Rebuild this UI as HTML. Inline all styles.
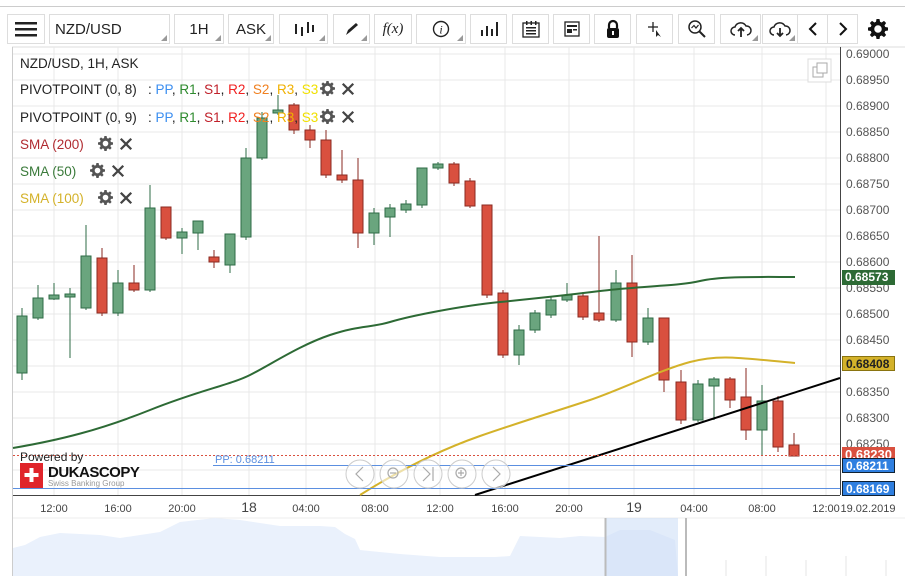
<!DOCTYPE html>
<html><head><meta charset="utf-8"><style>
body{margin:0;width:905px;height:576px;background:#fff;font-family:"Liberation Sans",sans-serif;overflow:hidden;position:relative}
.tb{position:absolute;top:14px;height:30px;border:1px solid #ddd;box-sizing:border-box;background:#fff;font-size:15px;color:#222;display:flex;align-items:center;justify-content:center}
.tb.dd:after{content:"";position:absolute;right:2px;bottom:2px;border-left:6px solid transparent;border-bottom:6px solid #999}
.lg{position:absolute;left:20px;font-size:13.5px;color:#222;white-space:nowrap;height:18px;line-height:18px}
.lg svg{margin-left:6px;vertical-align:-2px}
.pl{position:absolute;left:842px;width:53px;height:15px;font-size:12px;color:#fff;font-weight:bold;line-height:15px;padding-left:3px;box-sizing:border-box}
</style></head><body>
<svg width="0" height="0" style="position:absolute"><defs>
<symbol id="g" viewBox="0 0 16 16"><path d="M6.8 0h2.4l.4 2.2 1.3.6 1.9-1.3 1.7 1.7-1.3 1.9.6 1.3 2.2.4v2.4l-2.2.4-.6 1.3 1.3 1.9-1.7 1.7-1.9-1.3-1.3.6-.4 2.2H6.8l-.4-2.2-1.3-.6-1.9 1.3-1.7-1.7 1.3-1.9-.6-1.3L0 9.2V6.8l2.2-.4.6-1.3-1.3-1.9 1.7-1.7 1.9 1.3 1.3-.6z M8 5a3 3 0 1 0 0 6a3 3 0 1 0 0-6z" fill-rule="evenodd"/></symbol>
<symbol id="x" viewBox="0 0 16 16"><path d="M2 2L14 14M14 2L2 14" stroke="#444" stroke-width="2.6"/></symbol>
</defs></svg>
<div style="position:absolute;left:0;top:6px;width:905px;height:1px;background:#ccc"></div>
<div class="tb" style="left:7px;width:38px"><svg width="22" height="16"><rect y="1" width="22" height="2.5" fill="#222"/><rect y="7" width="22" height="2.5" fill="#222"/><rect y="13" width="22" height="2.5" fill="#222"/></svg></div>
<div class="tb dd" style="left:49px;width:121px;justify-content:flex-start;padding-left:5px">NZD/USD</div>
<div class="tb dd" style="left:174px;width:50px">1H</div>
<div class="tb dd" style="left:228px;width:46px">ASK</div>
<div class="tb dd" style="left:279px;width:49px"><svg width="22" height="16"><g stroke="#222" stroke-width="2"><line x1="3" y1="3" x2="3" y2="13"/><line x1="9" y1="6" x2="9" y2="15"/><line x1="15" y1="1" x2="15" y2="12"/><line x1="20" y1="4" x2="20" y2="11"/></g></svg></div>
<div class="tb dd" style="left:333px;width:37px"><svg width="16" height="16"><path d="M2 14 L4 9 L12 2 L14 4 L6 11 Z" fill="#222"/></svg></div>
<div class="tb" style="left:374px;width:38px;font-family:'Liberation Serif',serif;font-style:italic">f(x)</div>
<div class="tb dd" style="left:416px;width:50px"><svg width="18" height="18"><circle cx="9" cy="9" r="7.5" fill="none" stroke="#222" stroke-width="1.4"/><text x="9" y="13.5" font-size="12" font-style="italic" font-family="Liberation Serif" text-anchor="middle" fill="#222">i</text></svg></div>
<div class="tb" style="left:470px;width:37px"><svg width="18" height="16"><g fill="#222"><rect x="1" y="9" width="2" height="6"/><rect x="6" y="5" width="2" height="10"/><rect x="11" y="8" width="2" height="7"/><rect x="16" y="1" width="2" height="14"/></g></svg></div>
<div class="tb" style="left:512px;width:37px"><svg width="20" height="20"><rect x="2" y="4" width="16" height="14" fill="none" stroke="#222" stroke-width="1.3"/><g fill="#222"><rect x="5" y="2" width="1.5" height="4"/><rect x="9.5" y="2" width="1.5" height="4"/><rect x="14" y="2" width="1.5" height="4"/><rect x="5" y="8" width="10" height="1.5"/><rect x="5" y="11" width="10" height="1.5"/><rect x="5" y="14" width="10" height="1.5"/></g></svg></div>
<div class="tb" style="left:553px;width:37px"><svg width="18" height="18"><rect x="2" y="2" width="14" height="14" fill="none" stroke="#222" stroke-width="1.3"/><rect x="4" y="5" width="10" height="2" fill="#222"/><rect x="4" y="9" width="5" height="4" fill="#222"/><rect x="10" y="9" width="4" height="1.5" fill="#222"/></svg></div>
<div class="tb" style="left:594px;width:37px"><svg width="16" height="20"><path d="M4 9 V6 a4 4 0 0 1 8 0 V9" fill="none" stroke="#111" stroke-width="2.2"/><rect x="2" y="9" width="12" height="10" rx="2" fill="#111"/><rect x="7" y="12" width="2" height="4" fill="#fff"/></svg></div>
<div class="tb" style="left:636px;width:37px"><svg width="20" height="20"><g stroke="#222" stroke-width="1.3"><line x1="8" y1="3" x2="8" y2="13"/><line x1="3" y1="8" x2="13" y2="8"/></g><path d="M11 11 L11 18 L13 16 L16 18 Z" fill="#222"/></svg></div>
<div class="tb" style="left:678px;width:37px"><svg width="20" height="20"><circle cx="8" cy="8" r="6" fill="none" stroke="#222" stroke-width="1.5"/><line x1="12.5" y1="12.5" x2="18" y2="18" stroke="#222" stroke-width="2"/><path d="M4.5 9 L7 6.5 L9 9 L11.5 6" fill="none" stroke="#222" stroke-width="1.2"/></svg></div>
<div class="tb dd" style="left:720px;width:41px"><svg width="24" height="18"><path d="M6 15 a4 4 0 0 1 0-8 a6 6 0 0 1 11-1 a4.5 4.5 0 0 1 1 9" fill="none" stroke="#222" stroke-width="1.5"/><path d="M12 17 V9 M9 11 L12 8 L15 11" fill="none" stroke="#222" stroke-width="1.8"/></svg></div>
<div class="tb dd" style="left:762px;width:36px"><svg width="24" height="18"><path d="M6 15 a4 4 0 0 1 0-8 a6 6 0 0 1 11-1 a4.5 4.5 0 0 1 1 9" fill="none" stroke="#222" stroke-width="1.5"/><path d="M12 8 V16 M9 13 L12 16 L15 13" fill="none" stroke="#222" stroke-width="1.8"/></svg></div>
<div class="tb" style="left:797px;width:31px"><svg width="12" height="16"><path d="M9 2 L3 8 L9 14" fill="none" stroke="#111" stroke-width="2"/></svg></div>
<div class="tb" style="left:827px;width:31px"><svg width="12" height="16"><path d="M3 2 L9 8 L3 14" fill="none" stroke="#111" stroke-width="2"/></svg></div>
<svg style="position:absolute;left:868px;top:19px" width="20" height="20" fill="#111"><use href="#g"/></svg>

<svg style="position:absolute;left:0;top:0" width="905" height="576">
<line x1="12" y1="47" x2="905" y2="47" stroke="#ddd"/>
<line x1="12.5" y1="47" x2="12.5" y2="576" stroke="#ccc"/>
<g stroke="#e8e8e8" stroke-width="1">
<line x1="13" y1="54" x2="840" y2="54"/><line x1="13" y1="80" x2="840" y2="80"/><line x1="13" y1="106" x2="840" y2="106"/><line x1="13" y1="132" x2="840" y2="132"/><line x1="13" y1="158" x2="840" y2="158"/><line x1="13" y1="184" x2="840" y2="184"/><line x1="13" y1="210" x2="840" y2="210"/><line x1="13" y1="236" x2="840" y2="236"/><line x1="13" y1="262" x2="840" y2="262"/><line x1="13" y1="288" x2="840" y2="288"/><line x1="13" y1="314" x2="840" y2="314"/><line x1="13" y1="340" x2="840" y2="340"/><line x1="13" y1="366" x2="840" y2="366"/><line x1="13" y1="392" x2="840" y2="392"/><line x1="13" y1="418" x2="840" y2="418"/><line x1="13" y1="444" x2="840" y2="444"/><line x1="13" y1="470" x2="840" y2="470"/>
<line x1="54" y1="47" x2="54" y2="495"/><line x1="118" y1="47" x2="118" y2="495"/><line x1="182" y1="47" x2="182" y2="495"/><line x1="249" y1="47" x2="249" y2="495"/><line x1="306" y1="47" x2="306" y2="495"/><line x1="375" y1="47" x2="375" y2="495"/><line x1="440" y1="47" x2="440" y2="495"/><line x1="505" y1="47" x2="505" y2="495"/><line x1="569" y1="47" x2="569" y2="495"/><line x1="634" y1="47" x2="634" y2="495"/><line x1="694" y1="47" x2="694" y2="495"/><line x1="762" y1="47" x2="762" y2="495"/><line x1="826" y1="47" x2="826" y2="495"/>
</g>
<line x1="840.5" y1="47" x2="840.5" y2="495" stroke="#444"/>
<line x1="13" y1="495.5" x2="840" y2="495.5" stroke="#444"/>
<g font-size="12" fill="#555" font-family="Liberation Sans">
<text x="846" y="58">0.69000</text><text x="846" y="84">0.68950</text><text x="846" y="110">0.68900</text><text x="846" y="136">0.68850</text><text x="846" y="162">0.68800</text><text x="846" y="188">0.68750</text><text x="846" y="214">0.68700</text><text x="846" y="240">0.68650</text><text x="846" y="266">0.68600</text><text x="846" y="292">0.68550</text><text x="846" y="318">0.68500</text><text x="846" y="344">0.68450</text><text x="846" y="396">0.68350</text><text x="846" y="422">0.68300</text><text x="846" y="448">0.68250</text>
</g>
<g font-size="11" fill="#444" text-anchor="middle">
<text x="54" y="512">12:00</text><text x="118" y="512">16:00</text><text x="182" y="512">20:00</text><text x="249" y="512" font-size="14">18</text><text x="306" y="512">04:00</text><text x="375" y="512">08:00</text><text x="440" y="512">12:00</text><text x="505" y="512">16:00</text><text x="569" y="512">20:00</text><text x="634" y="512" font-size="14">19</text><text x="694" y="512">04:00</text><text x="762" y="512">08:00</text><text x="826" y="512">12:00</text><text x="868" y="512">19.02.2019</text>
</g>
<rect x="808" y="59" width="23" height="23" fill="#fff" stroke="#ddd"/><rect x="813" y="67" width="10" height="10" fill="none" stroke="#aaa"/><rect x="817" y="63" width="10" height="10" fill="#fff" stroke="#aaa"/>
<g stroke-width="1">
<g stroke="#2e6b46" fill="#6aa57e">
<line x1="22" y1="308" x2="22" y2="380"/><rect x="17" y="316" width="10" height="57"/>
<line x1="38" y1="285" x2="38" y2="320"/><rect x="33" y="298" width="10" height="20"/>
<line x1="54" y1="283" x2="54" y2="300"/><rect x="49" y="295" width="10" height="4"/>
<line x1="70" y1="288" x2="70" y2="358"/><rect x="65" y="294" width="10" height="3"/>
<line x1="86" y1="225" x2="86" y2="310"/><rect x="81" y="256" width="10" height="52"/>
<line x1="118" y1="270" x2="118" y2="316"/><rect x="113" y="283" width="10" height="30"/>
<line x1="150" y1="185" x2="150" y2="292"/><rect x="145" y="208" width="10" height="82"/>
<line x1="182" y1="228" x2="182" y2="254"/><rect x="177" y="232" width="10" height="6"/>
<line x1="198" y1="221" x2="198" y2="250"/><rect x="193" y="221" width="10" height="12"/>
<line x1="230" y1="234" x2="230" y2="273"/><rect x="225" y="234" width="10" height="31"/>
<line x1="246" y1="148" x2="246" y2="240"/><rect x="241" y="158" width="10" height="79"/>
<line x1="262" y1="112" x2="262" y2="160"/><rect x="257" y="118" width="10" height="40"/>
<line x1="278" y1="95" x2="278" y2="115"/><rect x="273" y="110" width="10" height="3"/>
<line x1="374" y1="208" x2="374" y2="245"/><rect x="369" y="213" width="10" height="20"/>
<line x1="390" y1="204" x2="390" y2="237"/><rect x="385" y="208" width="10" height="9"/>
<line x1="406" y1="200" x2="406" y2="213"/><rect x="401" y="204" width="10" height="6"/>
<line x1="422" y1="168" x2="422" y2="208"/><rect x="417" y="168" width="10" height="37"/>
<line x1="438" y1="162" x2="438" y2="170"/><rect x="433" y="164" width="10" height="4"/>
<line x1="519" y1="325" x2="519" y2="365"/><rect x="514" y="330" width="10" height="25"/>
<line x1="535" y1="310" x2="535" y2="333"/><rect x="530" y="313" width="10" height="17"/>
<line x1="551" y1="296" x2="551" y2="318"/><rect x="546" y="300" width="10" height="15"/>
<line x1="567" y1="283" x2="567" y2="302"/><rect x="562" y="295" width="10" height="5"/>
<line x1="616" y1="270" x2="616" y2="322"/><rect x="611" y="283" width="10" height="37"/>
<line x1="648" y1="308" x2="648" y2="345"/><rect x="643" y="318" width="10" height="24"/>
<line x1="698" y1="380" x2="698" y2="422"/><rect x="693" y="384" width="10" height="36"/>
<line x1="714" y1="377" x2="714" y2="420"/><rect x="709" y="379" width="10" height="7"/>
<line x1="762" y1="385" x2="762" y2="456"/><rect x="757" y="401" width="10" height="29"/>
</g>
<g stroke="#8a2a20" fill="#d9503f">
<line x1="102" y1="248" x2="102" y2="316"/><rect x="97" y="258" width="10" height="55"/>
<line x1="134" y1="265" x2="134" y2="292"/><rect x="129" y="283" width="10" height="7"/>
<line x1="166" y1="207" x2="166" y2="240"/><rect x="161" y="207" width="10" height="31"/>
<line x1="214" y1="250" x2="214" y2="268"/><rect x="209" y="257" width="10" height="5"/>
<line x1="294" y1="103" x2="294" y2="134"/><rect x="289" y="105" width="10" height="25"/>
<line x1="310" y1="125" x2="310" y2="148"/><rect x="305" y="130" width="10" height="10"/>
<line x1="326" y1="130" x2="326" y2="178"/><rect x="321" y="140" width="10" height="35"/>
<line x1="342" y1="150" x2="342" y2="183"/><rect x="337" y="175" width="10" height="5"/>
<line x1="358" y1="158" x2="358" y2="248"/><rect x="353" y="180" width="10" height="53"/>
<line x1="454" y1="162" x2="454" y2="186"/><rect x="449" y="164" width="10" height="19"/>
<line x1="470" y1="178" x2="470" y2="208"/><rect x="465" y="181" width="10" height="25"/>
<line x1="487" y1="205" x2="487" y2="298"/><rect x="482" y="205" width="10" height="90"/>
<line x1="503" y1="290" x2="503" y2="358"/><rect x="498" y="293" width="10" height="62"/>
<line x1="583" y1="292" x2="583" y2="320"/><rect x="578" y="296" width="10" height="21"/>
<line x1="599" y1="236" x2="599" y2="322"/><rect x="594" y="313" width="10" height="7"/>
<line x1="632" y1="255" x2="632" y2="357"/><rect x="627" y="283" width="10" height="59"/>
<line x1="664" y1="318" x2="664" y2="392"/><rect x="659" y="318" width="10" height="62"/>
<line x1="681" y1="370" x2="681" y2="424"/><rect x="676" y="382" width="10" height="38"/>
<line x1="730" y1="377" x2="730" y2="408"/><rect x="725" y="379" width="10" height="21"/>
<line x1="746" y1="368" x2="746" y2="440"/><rect x="741" y="397" width="10" height="33"/>
<line x1="778" y1="396" x2="778" y2="452"/><rect x="773" y="401" width="10" height="46"/>
<line x1="794" y1="433" x2="794" y2="456"/><rect x="789" y="445" width="10" height="11"/>
</g></g>
<path d="M13 448 C60 440 100 430 150 410 S230 385 250 375 S300 345 330 335 S370 328 390 322 S460 306 500 302 S560 296 600 291 S680 286 700 281 S760 277 795 277" fill="none" stroke="#2d6a35" stroke-width="2"/>
<path d="M360 495 C400 470 440 450 480 436 S560 410 590 400 S660 370 690 362 S740 358 795 363" fill="none" stroke="#d4b22a" stroke-width="2"/>
<line x1="475" y1="495" x2="840" y2="378" stroke="#000" stroke-width="2"/>
<line x1="13" y1="455.5" x2="840" y2="455.5" stroke="#d9503f" stroke-dasharray="2,2"/>
<line x1="213" y1="465.5" x2="840" y2="465.5" stroke="#5b8fe0"/>
<line x1="13" y1="488.5" x2="840" y2="488.5" stroke="#5b8fe0"/>
<text x="215" y="463" font-size="11" fill="#5b8fe0">PP: 0.68211</text>
<g fill="#fff" fill-opacity="0.6" stroke="#ccc"><circle cx="360" cy="474" r="14"/><circle cx="394" cy="474" r="14"/><circle cx="428" cy="474" r="14"/><circle cx="462" cy="474" r="14"/><circle cx="496" cy="474" r="14"/></g>
<g fill="none" stroke="#aaa" stroke-width="1.2"><path d="M363 467 L356 474 L363 481"/><circle cx="393" cy="473" r="5"/><line x1="390" y1="473" x2="396" y2="473"/><path d="M423 467 L430 474 L423 481 M433 467 V481"/><circle cx="461" cy="473" r="5"/><path d="M458 473 H464 M461 470 V476"/><path d="M493 467 L500 474 L493 481"/></g>
<text x="20" y="461" font-size="12" fill="#222">Powered by</text>
<rect x="20" y="463" width="23" height="25" fill="#e0252b"/><path d="M29.5 468 h4 v5 h5 v4 h-5 v5 h-4 v-5 h-5 v-4 h5z" fill="#fff"/>
<text x="48" y="477" font-size="15" font-weight="bold" fill="#111" letter-spacing="-0.5">DUKASCOPY</text>
<text x="48" y="486" font-size="8" fill="#999">Swiss Banking Group</text>
<line x1="13" y1="518" x2="905" y2="518" stroke="#eee"/>
<path d="M13 576 L13 548 L25 545 L40 537 L60 533 L100 535 L120 538 L160 532 L180 522 L215 518 L240 520 L280 526 L320 526 L335 527 L345 534 L355 539 L360 550 L400 554 L440 557 L470 557 L495 557 L510 556 L520 536 L560 538 L580 536 L605 537 L620 530 L650 530 L675 540 L678 576Z" fill="#eaf1fc"/>
<rect x="605" y="518" width="73" height="58" fill="#cfe0f7" fill-opacity="0.6"/>
<g stroke="#e6e6e6"><line x1="726" y1="560" x2="726" y2="576"/><line x1="766" y1="556" x2="766" y2="576"/><line x1="806" y1="560" x2="806" y2="576"/><line x1="846" y1="556" x2="846" y2="576"/><line x1="886" y1="560" x2="886" y2="576"/></g>
<line x1="605.5" y1="518" x2="605.5" y2="576" stroke="#bbb" stroke-width="2"/>
<line x1="686" y1="518" x2="686" y2="576" stroke="#bbb" stroke-width="2"/>
</svg>
<div class="pl" style="top:270px;background:#2d6a35">0.68573</div>
<div class="pl" style="top:356px;background:#d4b22a;color:#222;border:1px solid #8a7410">0.68408</div>
<div class="pl" style="top:447px;background:#d9503f;font-size:13px">0.68230</div>
<div class="pl" style="top:458px;background:#2f7fe0;border:1px solid #123">0.68211</div>
<div class="pl" style="top:481px;background:#2f7fe0;border:1px solid #123">0.68169</div>

<div class="lg" style="top:81px">PIVOTPOINT (0, 8) &nbsp;&nbsp;: <span style="color:#3b8ef0">PP</span>, <span style="color:#2e8b2e">R1</span>, <span style="color:#c0202a">S1</span>, <span style="color:#f02020">R2</span>, <span style="color:#f08020">S2</span>, <span style="color:#f0b000">R3</span>, <span style="color:#f0e000">S3</span><svg width="15" height="15" fill="#555" style="margin-left:2px"><use href="#g"/></svg><svg width="14" height="14"><use href="#x"/></svg></div>
<div class="lg" style="top:55px">NZD/USD, 1H, ASK</div>
<div class="lg" style="top:109px">PIVOTPOINT (0, 9) &nbsp;&nbsp;: <span style="color:#3b8ef0">PP</span>, <span style="color:#2e8b2e">R1</span>, <span style="color:#c0202a">S1</span>, <span style="color:#f02020">R2</span>, <span style="color:#f08020">S2</span>, <span style="color:#f0b000">R3</span>, <span style="color:#f0e000">S3</span><svg width="15" height="15" fill="#555" style="margin-left:2px"><use href="#g"/></svg><svg width="14" height="14"><use href="#x"/></svg></div>
<div class="lg" style="top:136px;color:#b02a30">SMA (200)<svg width="15" height="15" fill="#555" style="margin-left:14px"><use href="#g"/></svg><svg width="14" height="14"><use href="#x"/></svg></div>
<div class="lg" style="top:163px;color:#3a7a3a">SMA (50)<svg width="15" height="15" fill="#555" style="margin-left:14px"><use href="#g"/></svg><svg width="14" height="14"><use href="#x"/></svg></div>
<div class="lg" style="top:190px;color:#d4b22a">SMA (100)<svg width="15" height="15" fill="#555" style="margin-left:14px"><use href="#g"/></svg><svg width="14" height="14"><use href="#x"/></svg></div>
</body></html>
